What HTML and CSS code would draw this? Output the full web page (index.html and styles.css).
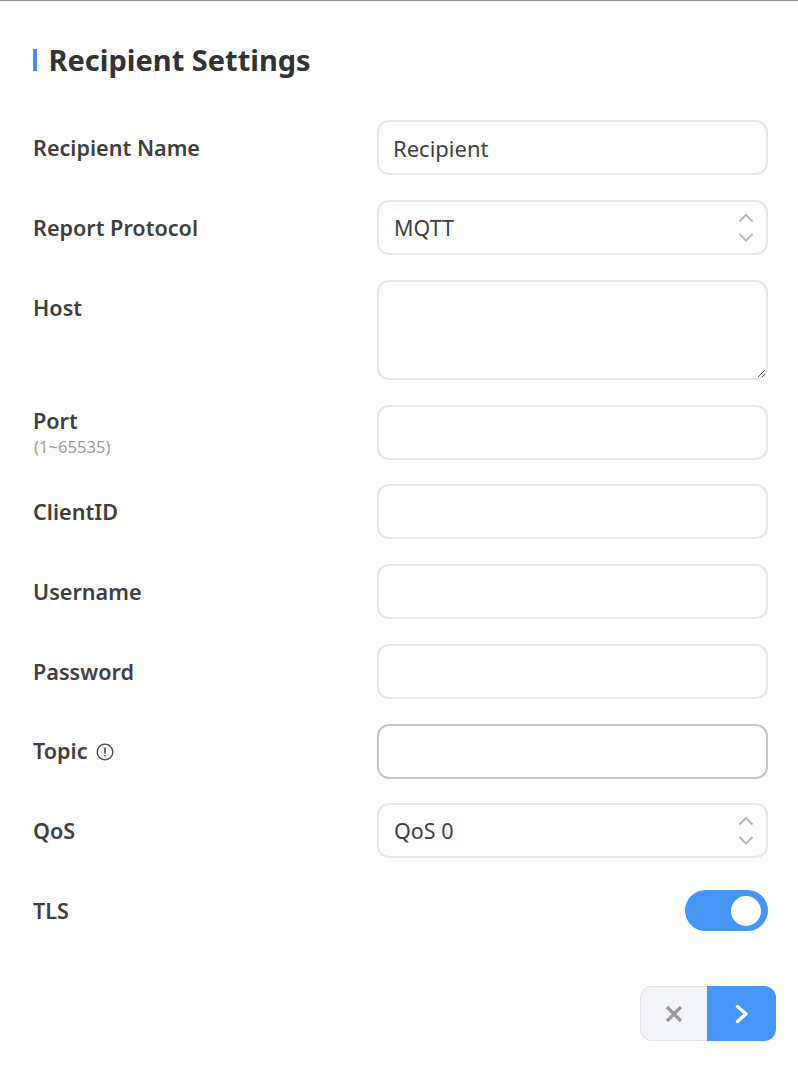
FILE: index.html
```html
<!DOCTYPE html>
<html lang="en">
<head>
    <meta charset="UTF-8">
    <meta name="viewport" content="width=device-width, initial-scale=1.0">
    <title>Recipient Settings</title>
    <link rel="stylesheet" href="styles.css">
</head>
<body>
    <div class="page">
        <h1 class="page-title">Recipient Settings</h1>

        <form class="settings-form">
            <div class="form-row">
                <label class="form-label" for="name">Recipient Name</label>
                <input class="form-input" type="text" id="name" value="Recipient">
            </div>

            <div class="form-row">
                <label class="form-label" for="protocol">Report Protocol</label>
                <div class="select-wrap">
                    <select class="form-input form-select" id="protocol">
                        <option>MQTT</option>
                    </select>
                    <svg class="select-arrows" width="16" height="32" viewBox="0 0 16 32" fill="none">
                        <path d="M1.5 9.5 L8 3 L14.5 9.5 M1.5 22 L8 28.5 L14.5 22" stroke="#b8b8bc" stroke-width="2"/>
                    </svg>
                </div>
            </div>

            <div class="form-row form-row-top">
                <label class="form-label" for="host">Host</label>
                <textarea class="form-input form-textarea" id="host"></textarea>
            </div>

            <div class="form-row">
                <label class="form-label form-label-hinted" for="port">Port
                    <small class="form-hint">(1~65535)</small>
                </label>
                <input class="form-input" type="text" id="port">
            </div>

            <div class="form-row">
                <label class="form-label" for="client-id">ClientID</label>
                <input class="form-input" type="text" id="client-id">
            </div>

            <div class="form-row">
                <label class="form-label" for="username">Username</label>
                <input class="form-input" type="text" id="username">
            </div>

            <div class="form-row">
                <label class="form-label" for="password">Password</label>
                <input class="form-input" type="text" id="password">
            </div>

            <div class="form-row">
                <label class="form-label" for="topic">Topic
                    <svg class="info-icon" width="18" height="18" viewBox="0 0 18 18" fill="none">
                        <circle cx="9" cy="9" r="7.8" stroke="#444" stroke-width="1.3"/>
                        <path d="M9 4.4 V10.4 M9 12 V13.6" stroke="#444" stroke-width="1.6"/>
                    </svg>
                </label>
                <input class="form-input form-input-active" type="text" id="topic">
            </div>

            <div class="form-row">
                <label class="form-label" for="qos">QoS</label>
                <div class="select-wrap">
                    <select class="form-input form-select" id="qos">
                        <option>QoS 0</option>
                    </select>
                    <svg class="select-arrows" width="16" height="32" viewBox="0 0 16 32" fill="none">
                        <path d="M1.5 9.5 L8 3 L14.5 9.5 M1.5 22 L8 28.5 L14.5 22" stroke="#b8b8bc" stroke-width="2"/>
                    </svg>
                </div>
            </div>

            <div class="form-row">
                <span class="form-label">TLS</span>
                <div class="switch-cell">
                    <span class="switch"><span class="switch-knob"></span></span>
                </div>
            </div>
        </form>

        <div class="actions">
            <button class="action-btn action-cancel" type="button" aria-label="Cancel">
                <svg width="18" height="18" viewBox="0 0 18 18" fill="none">
                    <path d="M2 2 L16 16 M16 2 L2 16" stroke="#9a9a9a" stroke-width="3.2"/>
                </svg>
            </button>
            <button class="action-btn action-next" type="button" aria-label="Next">
                <svg width="14" height="20" viewBox="0 0 14 20" fill="none">
                    <path d="M2.5 2.5 L11 10 L2.5 17.5" stroke="#fff" stroke-width="3.4" stroke-linecap="round" stroke-linejoin="round"/>
                </svg>
            </button>
        </div>
    </div>
</body>
</html>
```

FILE: styles.css
```css
body {
    margin: 0;
    font-family: "Noto Sans", "Open Sans", sans-serif;
    color: #3a3a3c;
    background-color: #fff;
}
.page {
    border-top: 1px solid #8a8a8a;
    padding: 48px 22px 36px 33px;
}
.page-title {
    box-sizing: border-box;
    margin: 0 0 49px 0;
    height: 22px;
    padding: 0 0 2px 11.5px;
    display: flex;
    align-items: center;
    border-left: 4px solid #4a90dc;
    font-size: 29px;
    font-weight: 700;
    color: #333;
}
.settings-form {
    display: flex;
    flex-direction: column;
    gap: 24.75px;
}
.form-row {
    display: grid;
    grid-template-columns: 344px 391px;
    min-height: 55px;
    align-items: center;
}
.form-row-top {
    align-items: start;
}
.form-row-top .form-label {
    line-height: 55px;
}
.form-label {
    display: block;
    padding-top: 0.5px;
    font-size: 21.6px;
    font-weight: 600;
    color: #3f3f42;
    line-height: 26px;
}
.form-label-hinted {
    padding-top: 3px;
}
.form-hint {
    display: block;
    margin-left: 1px;
    font-size: 16.6px;
    font-weight: 400;
    line-height: 26px;
    color: #9c9c9f;
}
.info-icon {
    margin-left: 3px;
    vertical-align: -2px;
}
.form-input {
    box-sizing: border-box;
    width: 100%;
    height: 55px;
    display: block;
    margin: 0;
    padding: 0 14px;
    border: 2px solid #e8e8ec;
    border-radius: 12px;
    background-color: #fff;
    font-family: inherit;
    font-size: 22px;
    color: #3f3f42;
    outline: none;
}
.form-input-active {
    border-color: #c6c6c8;
}
.form-select {
    appearance: none;
    -webkit-appearance: none;
    padding: 0 15px;
    font-size: 21.5px;
}
.form-textarea {
    height: 100.25px;
    resize: vertical;
}
.select-wrap {
    position: relative;
}
.select-arrows {
    position: absolute;
    top: 12px;
    right: 14px;
}
.switch-cell {
    display: flex;
    justify-content: flex-end;
}
.switch {
    box-sizing: border-box;
    width: 83px;
    height: 41px;
    padding: 6px 7px;
    display: flex;
    justify-content: flex-end;
    border-radius: 21px;
    background-color: #4596f5;
}
.switch-knob {
    width: 30px;
    height: 30px;
    border-radius: 50%;
    background-color: #fff;
}
.actions {
    display: flex;
    justify-content: flex-end;
    margin-top: 48px;
}
.action-btn {
    height: 55px;
    display: flex;
    align-items: center;
    justify-content: center;
    padding: 0;
    border: none;
    cursor: pointer;
}
.action-cancel {
    width: 67px;
    border: 1px solid #e2e2e8;
    border-right: none;
    border-radius: 12px 0 0 12px;
    background-color: #f4f5fa;
}
.action-next {
    width: 69px;
    border-radius: 0 12px 12px 0;
    background-color: #4596f5;
}
```
